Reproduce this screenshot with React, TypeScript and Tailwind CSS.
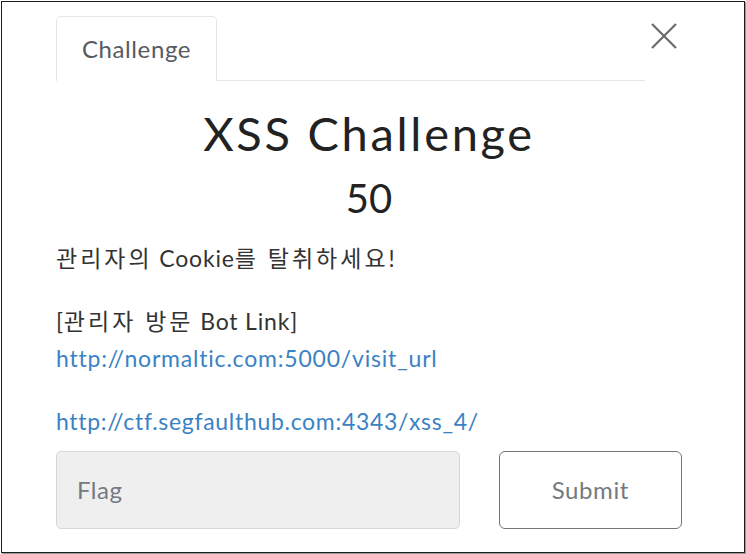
import React from "react";

function Ko({ children }: { children: React.ReactNode }) {
  return <span className="tracking-[3px]">{children}</span>;
}

export default function App() {
  const lato = { fontFamily: "Lato, 'Noto Sans CJK KR', sans-serif" };
  return (
    <div className="w-[746px] h-[554px] bg-white pl-px pt-px" style={lato}>
      <div className="w-[744px] h-[552px] border border-[#1c1c1c] shadow-[1px_1px_0_#9a9a9a] bg-white pl-[54px]">
        <div className="flex items-start mt-[14px]">
          <div className="w-[589px] h-[65px] flex border-b border-[#e3e6ea]">
            <div className="w-[161px] h-[65px] border border-b-0 border-[#e3e6ea] rounded-t-[5px] flex items-center justify-center text-[24px] tracking-[0.6px] text-[#555b61] bg-white">
              Challenge
            </div>
          </div>
          <button className="ml-[4px] mt-[5px] w-[30px] h-[30px] flex items-center justify-center text-[#6b6b6b]">
            <svg width="28" height="28" viewBox="0 0 28 28" fill="none" stroke="currentColor" strokeWidth="2.2">
              <path d="M2 2 L26 26 M26 2 L2 26" />
            </svg>
          </button>
        </div>
        <div className="w-[626px]">
          <h1 className="text-center text-[47px] leading-[56px] mt-[24px] text-[#222] tracking-[2.7px]">XSS Challenge</h1>
          <div className="text-center text-[40px] leading-[48px] mt-[13px] text-[#222]">50</div>
          <div className="text-[23px] tracking-[0.8px] text-[#333] mt-[20px] leading-[32px]">
            <p><Ko>관리자의</Ko> Cookie<Ko>를 탈취하세요</Ko>!</p>
            <p className="mt-[31px]">[<Ko>관리자 방문</Ko> Bot Link]</p>
            <p className="text-[#3a82c4] mt-[5px]">http://normaltic.com:5000/visit_url</p>
            <p className="text-[#3a82c4] mt-[31px] tracking-[0.7px]">http://ctf.segfaulthub.com:4343/xss_4/</p>
          </div>
          <div className="flex mt-[14px] gap-[39px]">
            <div className="w-[405px] h-[78px] bg-[#efefef] border border-[#d5d8db] rounded-[5px] flex items-center pl-[20px] text-[24px] tracking-[0.5px] text-[#737a80]">
              Flag
            </div>
            <div className="w-[184px] h-[78px] border-[1.5px] border-[#6f767c] rounded-[6px] flex items-center justify-center text-[24px] tracking-[0.6px] text-[#737a80]">
              Submit
            </div>
          </div>
        </div>
      </div>
    </div>
  );
}
